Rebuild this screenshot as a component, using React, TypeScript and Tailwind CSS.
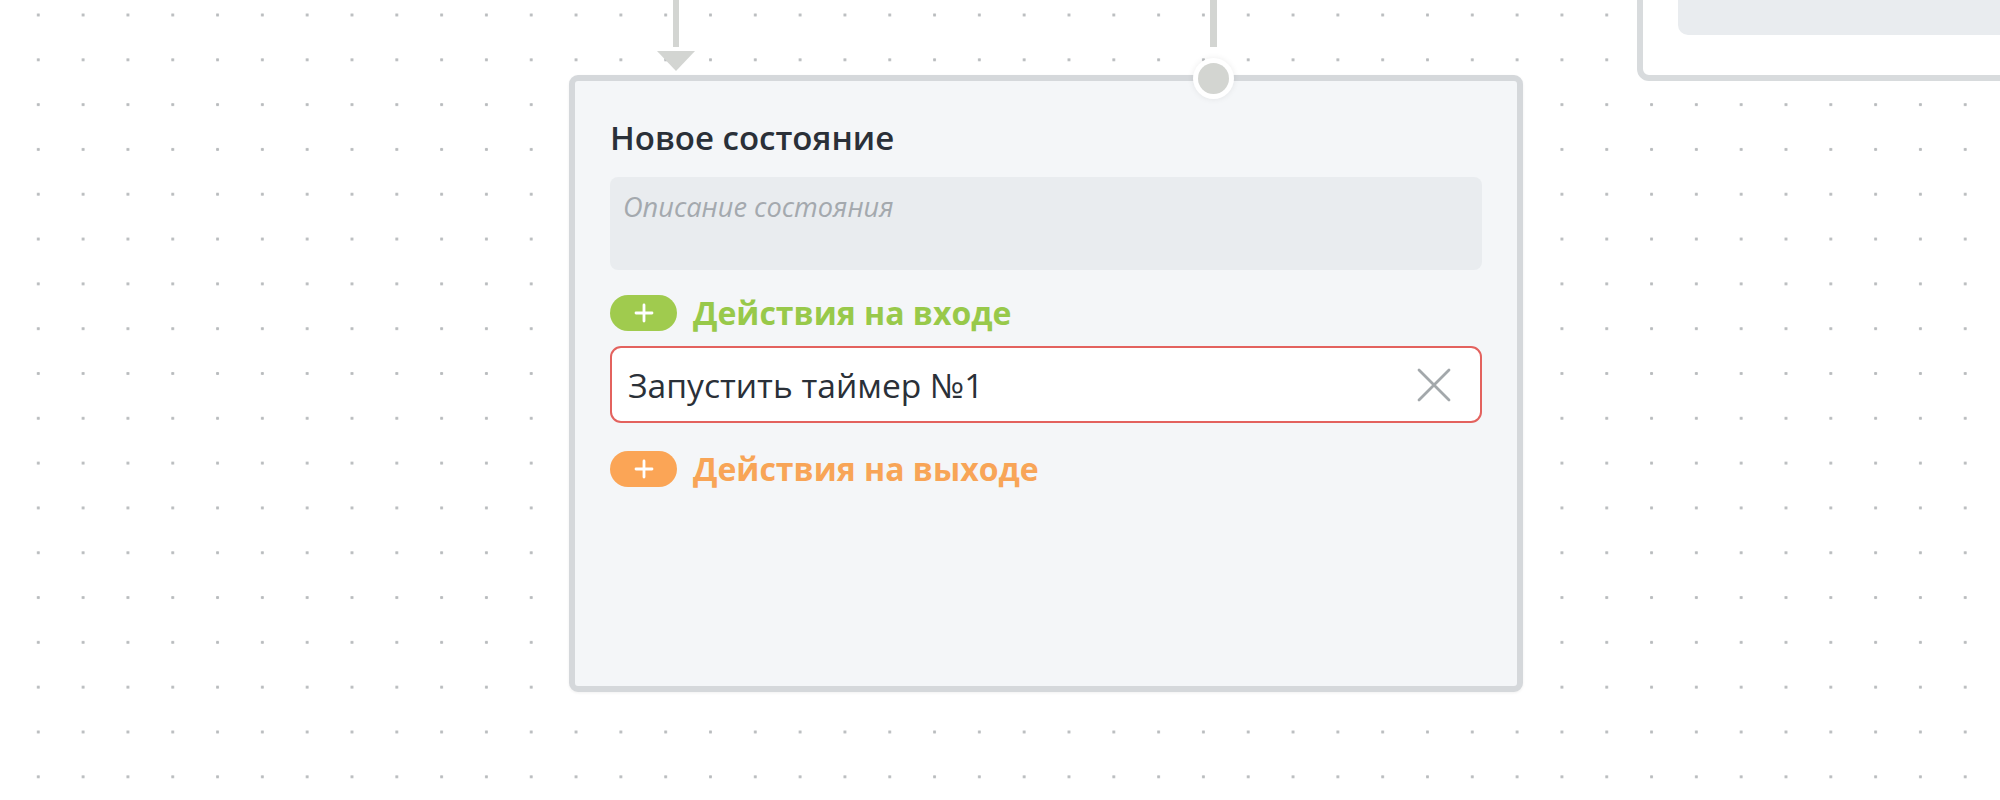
import React from "react";

const font = { fontFamily: '"Open Sans", "Noto Sans", sans-serif' };

function Plus() {
  return (
    <svg width="20" height="20" viewBox="0 0 20 20" fill="none">
      <path d="M10 2v16M2 10h16" stroke="white" strokeWidth="2.8" strokeLinecap="round" />
    </svg>
  );
}

function Cross() {
  return (
    <svg width="36" height="36" viewBox="0 0 36 36" fill="none">
      <path d="M3 3l30 30M33 3L3 33" stroke="#a3a8ab" strokeWidth="2.8" strokeLinecap="round" />
    </svg>
  );
}

export default function App() {
  return (
    <div
      className="relative w-[2000px] h-[800px] overflow-hidden bg-white bg-[radial-gradient(circle,#b9bcbe_1.3px,transparent_1.8px)] bg-[length:44.82px_44.82px] bg-[position:15.9px_37.4px]"
      style={font}
    >
      {/* connector 1: arrow */}
      <div className="absolute left-[673px] top-0 w-[6px] h-[47px] bg-[#d3d5d2]" />
      <svg className="absolute left-[657px] top-[51px]" width="38" height="20" viewBox="0 0 38 20">
        <polygon points="0,0 38,0 19,20" fill="#d3d5d2" />
      </svg>

      {/* connector 2: dot */}
      <div className="absolute left-[1210px] top-0 w-[7px] h-[47px] bg-[#d3d5d2]" />

      {/* top-right node (partially visible) */}
      <div className="absolute left-[1637px] top-[-220px] w-[500px] h-[301px] rounded-[12px] border-[6px] border-[#d8dbdd] bg-white">
        <div className="ml-[35px] h-[249px] rounded-[10px] bg-[#e9ecef]" />
      </div>

      {/* main node */}
      <div className="absolute left-[569px] top-[75px] w-[954px] h-[617px] rounded-[9px] border-[6px] border-[#d5d8db] bg-[#f4f6f8] pl-[35px] pr-[35px] pt-[38px] shadow-[0_1px_3px_rgba(0,0,0,0.06)]">
        <div className="text-[33px] leading-[38px] font-semibold text-[#2a3038]">Новое состояние</div>

        <div className="mt-[20px] h-[93px] rounded-[8px] bg-[#e9ecef] pl-[13px] pt-[13px]">
          <span className="text-[27.2px] leading-[34px] italic text-[#a4a9ae]">Описание состояния</span>
        </div>

        <div className="mt-[25px] flex items-center gap-[16px] h-[36px]">
          <div className="w-[67px] h-[36px] shrink-0 rounded-full bg-[#a0cb4e] flex items-center justify-center">
            <Plus />
          </div>
          <span className="text-[32px] leading-[36px] font-bold text-[#98c94a]">Действия на входе</span>
        </div>

        <div className="mt-[15px] h-[77px] rounded-[11px] border-[2.5px] border-[#e3625e] bg-white flex items-center justify-between pl-[16px] pr-[28px]">
          <span className="text-[33.6px] leading-[40px] text-[#2a3038]">Запустить таймер №1</span>
          <Cross />
        </div>

        <div className="mt-[28px] flex items-center gap-[16px] h-[36px]">
          <div className="w-[67px] h-[36px] shrink-0 rounded-full bg-[#fba556] flex items-center justify-center">
            <Plus />
          </div>
          <span className="text-[32px] leading-[36px] font-bold text-[#f8a557]">Действия на выходе</span>
        </div>
      </div>

      {/* output port circle */}
      <div className="absolute left-[1193px] top-[58px] w-[41px] h-[41px] rounded-full bg-white flex items-center justify-center shadow-[0_0_6px_rgba(0,0,0,0.08)]">
        <div className="w-[31px] h-[31px] rounded-full bg-[#d3d5d1]" />
      </div>
    </div>
  );
}
